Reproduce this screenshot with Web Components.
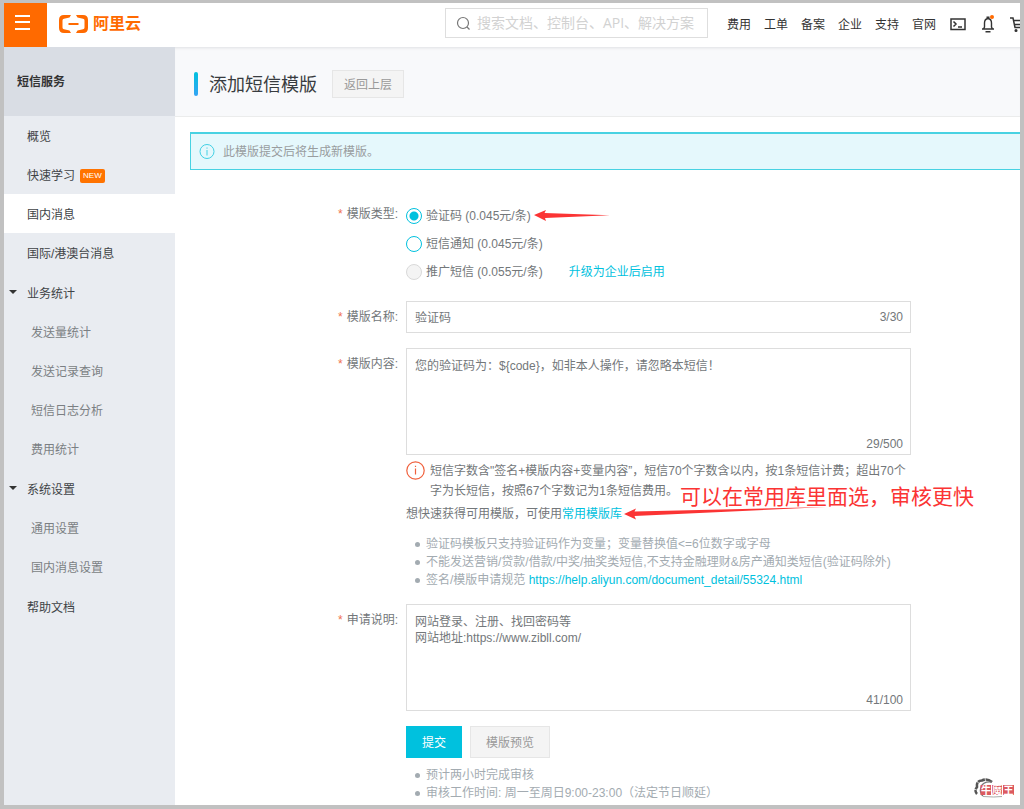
<!DOCTYPE html>
<html lang="zh-CN">
<head>
<meta charset="utf-8">
<title>添加短信模版</title>
<style>
  html { background: #c1c1c1; }
  body {
    margin: 0;
    font: 12px/16px "Liberation Sans", "Noto Sans CJK SC", sans-serif;
    color: #73777a;
    --cyan: #00c1de;
    --orange: #ff6a00;
    --line: #dddddd;
    --muted: #a3abb1;
    --red: #fb3434;
  }
</style>
</head>
<body>
<console-page>
  <console-header slot="header"></console-header>
  <side-nav slot="side" heading="短信服务">
    <side-item label="概览"></side-item>
    <side-item label="快速学习" badge="NEW"></side-item>
    <side-item label="国内消息" current></side-item>
    <side-item label="国际/港澳台消息"></side-item>
    <side-item label="业务统计" group></side-item>
    <side-item label="发送量统计" child></side-item>
    <side-item label="发送记录查询" child></side-item>
    <side-item label="短信日志分析" child></side-item>
    <side-item label="费用统计" child></side-item>
    <side-item label="系统设置" group></side-item>
    <side-item label="通用设置" child></side-item>
    <side-item label="国内消息设置" child></side-item>
    <side-item label="帮助文档" section></side-item>
  </side-nav>
  <page-title back="返回上层">添加短信模版</page-title>
  <info-alert>此模版提交后将生成新模版。</info-alert>
  <template-form>
    <type-picker></type-picker>
    <text-field label="模版名称:" value="验证码" count="3/30"></text-field>
    <text-field label="模版内容:" multiline value="您的验证码为：${code}，如非本人操作，请忽略本短信！" count="29/500">
      <content-hints></content-hints>
    </text-field>
    <text-field label="申请说明:" multiline value="网站登录、注册、找回密码等&#10;网站地址:https://www.zibll.com/" count="41/100"></text-field>
    <form-actions></form-actions>
  </template-form>
  <corner-mark slot="mark"></corner-mark>
</console-page>

<script>
const define = (name, render, wire) => customElements.define(name, class extends HTMLElement {
  connectedCallback() {
    if (this.shadowRoot) return;
    const template = document.createElement('template');
    template.innerHTML = render(this);
    this.attachShadow({ mode: 'open' }).append(template.content.cloneNode(true));
    if (wire) wire(this.shadowRoot, this);
  }
});

define('console-page', () => `
  <style>
    :host { display: flex; flex-direction: column; position: relative; box-sizing: border-box; min-height: 100vh;
      border: 4px solid #c1c1c1; border-top-width: 3px; background: #fff; }
    .body { flex: 1; display: flex; }
    main { flex: 1; min-width: 0; }
  </style>
  <slot name="header"></slot>
  <div class="body"><slot name="side"></slot><main><slot></slot></main></div>
  <slot name="mark"></slot>`);

define('console-header', () => `
  <style>
    :host { display: flex; align-items: center; height: 44px; overflow: hidden; position: relative; z-index: 1;
      background: #fff; color: #333; }
    .menu { width: 43px; height: 44px; padding: 0 6px 4px 0; border: 0; background: var(--orange); display: grid; place-items: center; }
    .menu svg { display: block; }
    .logo { display: flex; align-items: center; gap: 5px; margin-left: 12px; padding-bottom: 2px; color: var(--orange); text-decoration: none;
      font-size: 16px; line-height: 20px; font-weight: 700; }
    .logo svg { display: block; }
    .search { display: flex; align-items: center; gap: 6px; box-sizing: border-box; width: 263px; height: 30px; margin: 0 19px 4px auto;
      border: 1px solid #dedede; padding: 0 8px 0 10px; }
    .search svg { flex: none; }
    input { flex: 1; min-width: 0; border: 0; padding: 0; outline: 0; background: none;
      font: 14px/20px "Open Sans", "Noto Sans CJK SC", sans-serif; color: #333; }
    input::placeholder { color: #d2d2d2; opacity: 1; }
    nav { display: flex; gap: 13px; margin-right: 14px; white-space: nowrap; }
    nav a { color: inherit; text-decoration: none; }
    .tools { display: flex; gap: 14px; margin-right: -6px; padding-bottom: 2px; }
    .tools button { width: 16px; height: 18px; padding: 0; border: 0; background: none; }
    .tools svg { display: block; overflow: visible; }
  </style>
  <button class="menu" aria-label="菜单"><svg width="16" height="18" fill="#fff"><path d="M0 1h15v2H0zM0 7h15v2H0zM0 14h15v2H0z"/></svg></button>
  <a class="logo" href="#"><svg width="29" height="18" fill="currentColor">
    <path d="M12 0H5Q0 0 0 5v8q0 5 5 5h7l-1.500-2.500L5 14.300Q3.500 14 3.500 12.500v-7Q3.500 4 5 3.700l5.500-1.200zM17 0h7q5 0 5 5v8q0 5-5 5h-7l1.500-2.500 5.500-1.200q1.500-.3 1.500-1.800v-7q0-1.500-1.500-1.800l-5.500-1.200zM9.500 8h10v2h-10z"/></svg><span>阿里云</span></a>
  <label class="search"><svg width="15" height="15" fill="none" stroke="#777" stroke-width="1.200"><circle cx="7" cy="7" r="5.500"/><path d="M11 11l2.500 2.500"/></svg>
    <input type="text" aria-label="搜索" placeholder="搜索文档、控制台、API、解决方案"></label>
  <nav>${['费用', '工单', '备案', '企业', '支持', '官网'].map(t => `<a href="#">${t}</a>`).join('')}</nav>
  <div class="tools">
    <button aria-label="终端"><svg width="16" height="18" fill="none" stroke="#333" stroke-width="1.500"><path d="M1 4h14v10.500H1zM3.500 6.500L6 9l-2.500 2.500M8 12h4"/></svg></button>
    <button aria-label="通知"><svg width="16" height="18" fill="none" stroke="#333" stroke-width="1.400"><path d="M2 14h12M3.500 14l1-2V8q0-4 3.500-4.500 3.500.5 3.500 4.500v4l1 2M5.500 16.800h5M6.500 2.200h3"/><circle cx="12" cy="2" r="2" fill="#ff6a00" stroke="none"/></svg></button>
    <button aria-label="购物车"><svg width="16" height="18" fill="none" stroke="#333" stroke-width="1.500"><path d="M0 3h3l2 9.500h9M3.500 5.500h12l-1.500 4H4.500"/><circle cx="6" cy="15.500" r=".8"/><circle cx="13" cy="15.500" r=".8"/></svg></button>
  </div>`);

define('side-nav', el => `
  <style>
    :host { display: block; flex: none; width: 171px; background: #e9ecf1; }
    h2 { margin: 0; padding: 0 13px; height: 69px; line-height: 71px; font-size: 12px; font-weight: 700; color: #333; background: #d9dde4; }
  </style>
  <h2>${el.getAttribute('heading')}</h2><nav><slot></slot></nav>`);

define('side-item', el => `
  <style>
    :host { display: block; }
    :host([group]), :host([section]) { margin-top: 1px; }
    a { display: flex; align-items: center; gap: 5px; box-sizing: border-box; height: 39px; padding: 2px 0 0 23px; color: #404346; text-decoration: none; position: relative; }
    :host([current]) a { background: #fff; }
    :host([child]) a { padding-left: 27px; color: #7b7f83; }
    :host([group]) a::before { content: ""; position: absolute; left: 5px; top: 17px; border: 4px solid transparent; border-top-color: #333; border-bottom: 0; }
    b { font-size: 8px; line-height: 14px; padding: 0 3px; border-radius: 2px; background: #ff7300; color: #fff; font-weight: 400; }
  </style>
  <a href="#"${el.hasAttribute('current') ? ' aria-current="page"' : ''}><span>${el.getAttribute('label')}</span>${el.hasAttribute('badge') ? `<b>${el.getAttribute('badge')}</b>` : ''}</a>`);

define('page-title', el => `
  <style>
    :host { display: flex; align-items: center; height: 70px; box-sizing: border-box; padding: 4px 19px 0;
      background: #f8f9fb; border-bottom: 1px solid #ebecec; box-shadow: inset 0 3px 3px -2px #dfe1e3; }
    h1 { margin: 0 15px 0 0; font-size: 18px; line-height: 22px; font-weight: 400; color: #383c40; display: flex; gap: 11px; }
    h1 span { padding-top: 2px; }
    h1::before { content: ""; width: 4px; border-radius: 2px; background: linear-gradient(#00c1de, #35a4f4); }
    button { height: 28px; padding: 2px 11px 0; border: 1px solid #e6e6e6; background: #f4f4f4; color: #999; font: inherit; }
  </style>
  <h1><span><slot></slot></span></h1><button>${el.getAttribute('back')}</button>`);

define('info-alert', () => `
  <style>
    :host { display: flex; align-items: center; gap: 8px; box-sizing: border-box; height: 38px; margin: 15px 0 0 15px; padding-left: 8px;
      background: #e5f8fc; border: solid #48d2e2; border-width: 2px 0 1px 1px; color: #999d9f; }
  </style>
  <svg width="16" height="16" fill="none" stroke="#42d0e4"><circle cx="8" cy="7.500" r="7"/><path d="M8 6V11.500M8 3.500v1.200"/></svg>
  <span><slot></slot></span>`);

define('template-form', () => `
  <style>
    :host { display: block; padding: 32px 16px 0; }
    form { display: flex; flex-direction: column; gap: 15px; }
  </style>
  <form><slot></slot></form>`);

const rowCss = `
    .row { display: grid; grid-template-columns: 207px minmax(0, 505px); column-gap: 8px; }
    .name { text-align: right; line-height: 32px; }
    .name::before { content: "*"; color: #f0714f; margin-right: 4px; }`;

const listCss = `
    ul { list-style: none; margin: 0; padding: 0 0 0 9px; line-height: 18px; color: var(--muted); }
    li { display: flex; align-items: center; gap: 6px; white-space: nowrap; }
    li::before { content: ""; width: 5px; height: 5px; border-radius: 50%; background: #a3abb1; }`;

define('type-picker', () => `
  <style>
    :host { display: block; } ${rowCss}
    .name { line-height: 24px; }
    .option { display: flex; align-items: center; height: 28px; white-space: nowrap; }
    label { display: flex; align-items: center; gap: 4px; }
    input { appearance: none; box-sizing: border-box; width: 16px; height: 16px; margin: 0; border: 1px solid var(--cyan); border-radius: 50%; background: #fff; }
    input:checked { background: radial-gradient(circle, #00c1de 4px, transparent 5px); }
    input:disabled { border-color: #d9d9d9; background: #f4f4f4; }
    a { color: var(--cyan); text-decoration: none; margin-left: 26px; }
    svg { margin-left: 3px; }
  </style>
  <div class="row" role="radiogroup" aria-labelledby="type">
    <span class="name" id="type">模版类型:</span>
    <div>
      <div class="option"><label><input type="radio" name="kind" checked><span>验证码 (0.045元/条)</span></label>
        <svg width="76" height="12" fill="#fb3434"><path d="M0 5L12 0l-1.500 3L76 5.200 11 8l1 3z"/></svg></div>
      <div class="option"><label><input type="radio" name="kind"><span>短信通知 (0.045元/条)</span></label></div>
      <div class="option"><label><input type="radio" name="kind" disabled><span>推广短信 (0.055元/条)</span></label><a href="#">升级为企业后启用</a></div>
    </div>
  </div>`);

define('text-field', el => `
  <style>
    :host { display: block; } ${rowCss}
    .box { position: relative; display: flex; }
    input, textarea { flex: 1; min-width: 0; box-sizing: border-box; margin: 0; border: 1px solid var(--line); border-radius: 0;
      background: #fff; color: inherit; font: inherit; outline: 0; resize: none; }
    input { height: 32px; padding: 0 8px 2px; }
    textarea { height: 107px; padding: 9px 8px; }
    .count { position: absolute; right: 8px; bottom: 8px; line-height: 16px; }
    :host([multiline]) .count { bottom: 3px; }
  </style>
  <div class="row">
    <label class="name" for="field">${el.getAttribute('label')}</label>
    <div><div class="box">${el.hasAttribute('multiline') ? '<textarea id="field"></textarea>' : '<input id="field" type="text">'}
      <span class="count">${el.getAttribute('count')}</span></div><slot></slot></div>
  </div>`, (root, el) => { root.getElementById('field').value = el.getAttribute('value'); });

define('content-hints', () => `
  <style>
    :host { display: block; position: relative; padding-top: 6px; } ${listCss}
    .notice { display: flex; gap: 5px; line-height: 20px; white-space: nowrap; }
    .notice svg { flex: none; }
    p { margin: 0; line-height: 20px; white-space: nowrap; }
    .quick { margin: 3px 0 11px; }
    a { color: var(--cyan); text-decoration: none; }
    .arrow { position: absolute; left: 218px; top: 51px; }
    .remark { position: absolute; left: 274px; top: 28px; font-size: 21px; line-height: 28px; color: var(--red); white-space: nowrap; }
  </style>
  <div class="notice"><svg width="19" height="20" fill="none" stroke="#f0603c" stroke-width="1.200"><circle cx="9.500" cy="9.500" r="8.700"/><path d="M9.500 7.500v6M9.500 4.800v1.300"/></svg>
    <p>短信字数含"签名+模版内容+变量内容”，短信70个字数含以内，按1条短信计费；超出70个<br>字为长短信，按照67个字数记为1条短信费用。</p></div>
  <p class="quick">想快速获得可用模版，可使用<a href="#">常用模版库</a></p>
  <ul>
    <li>验证码模板只支持验证码作为变量；变量替换值&lt;=6位数字或字母</li>
    <li>不能发送营销/贷款/借款/中奖/抽奖类短信,不支持金融理财&amp;房产通知类短信(验证码除外)</li>
    <li><span>签名/模版申请规范 <a href="https://help.aliyun.com/document_detail/55324.html">https://help.aliyun.com/document_detail/55324.html</a></span></li>
  </ul>
  <svg class="arrow" width="202" height="14" fill="#fb3434"><path d="M0 8L12 2.500l-1.500 3L202 1 10.500 10l1.500 3.500z"/></svg>
  <span class="remark">可以在常用库里面选，审核更快</span>`);

define('form-actions', () => `
  <style>
    :host { display: block; padding: 0 0 2px 215px; } ${listCss}
    .buttons { display: flex; gap: 8px; margin-bottom: 8px; }
    button { height: 32px; padding: 2px 15px 0; border: 1px solid #e6e6e6; background: #f4f4f4; color: #999; font: inherit; }
    .primary { border-color: var(--cyan); background: var(--cyan); color: #fff; }
  </style>
  <div class="buttons"><button class="primary" type="submit">提交</button><button type="button">模版预览</button></div>
  <ul><li>预计两小时完成审核</li><li>审核工作时间: 周一至周日9:00-23:00（法定节日顺延）</li></ul>`);

define('corner-mark', () => `
  <style>:host { position: absolute; right: 5px; bottom: 5px; } svg { display: block; }</style>
  <svg width="42" height="22" viewBox="0 0 42 22">
    <path d="M19 4Q14 0 9 2.500 3 3 4 9q-3 4 0 7" fill="none" stroke="#555" stroke-width="2.600" stroke-dasharray="7 .7"/>
    <path d="M19 4q-9-1-11 5-2 6 2 9" fill="none" stroke="#777" stroke-width="1.200"/>
    <path d="M7.500 7h10.500v10H7.500zM19 7h10v10H19zM30 7h11v10H30z" fill="#dc5a5f"/>
    <path d="M10 18.500q12 1 19 0" fill="none" stroke="#aaa"/>
    <text x="8" y="15.500" font-size="10" font-weight="700" font-family="Noto Sans CJK SC, sans-serif" fill="#fff"><tspan>牛</tspan><tspan x="19">魔</tspan><tspan x="30.500">王</tspan></text>
  </svg>`);
</script>
</body>
</html>
